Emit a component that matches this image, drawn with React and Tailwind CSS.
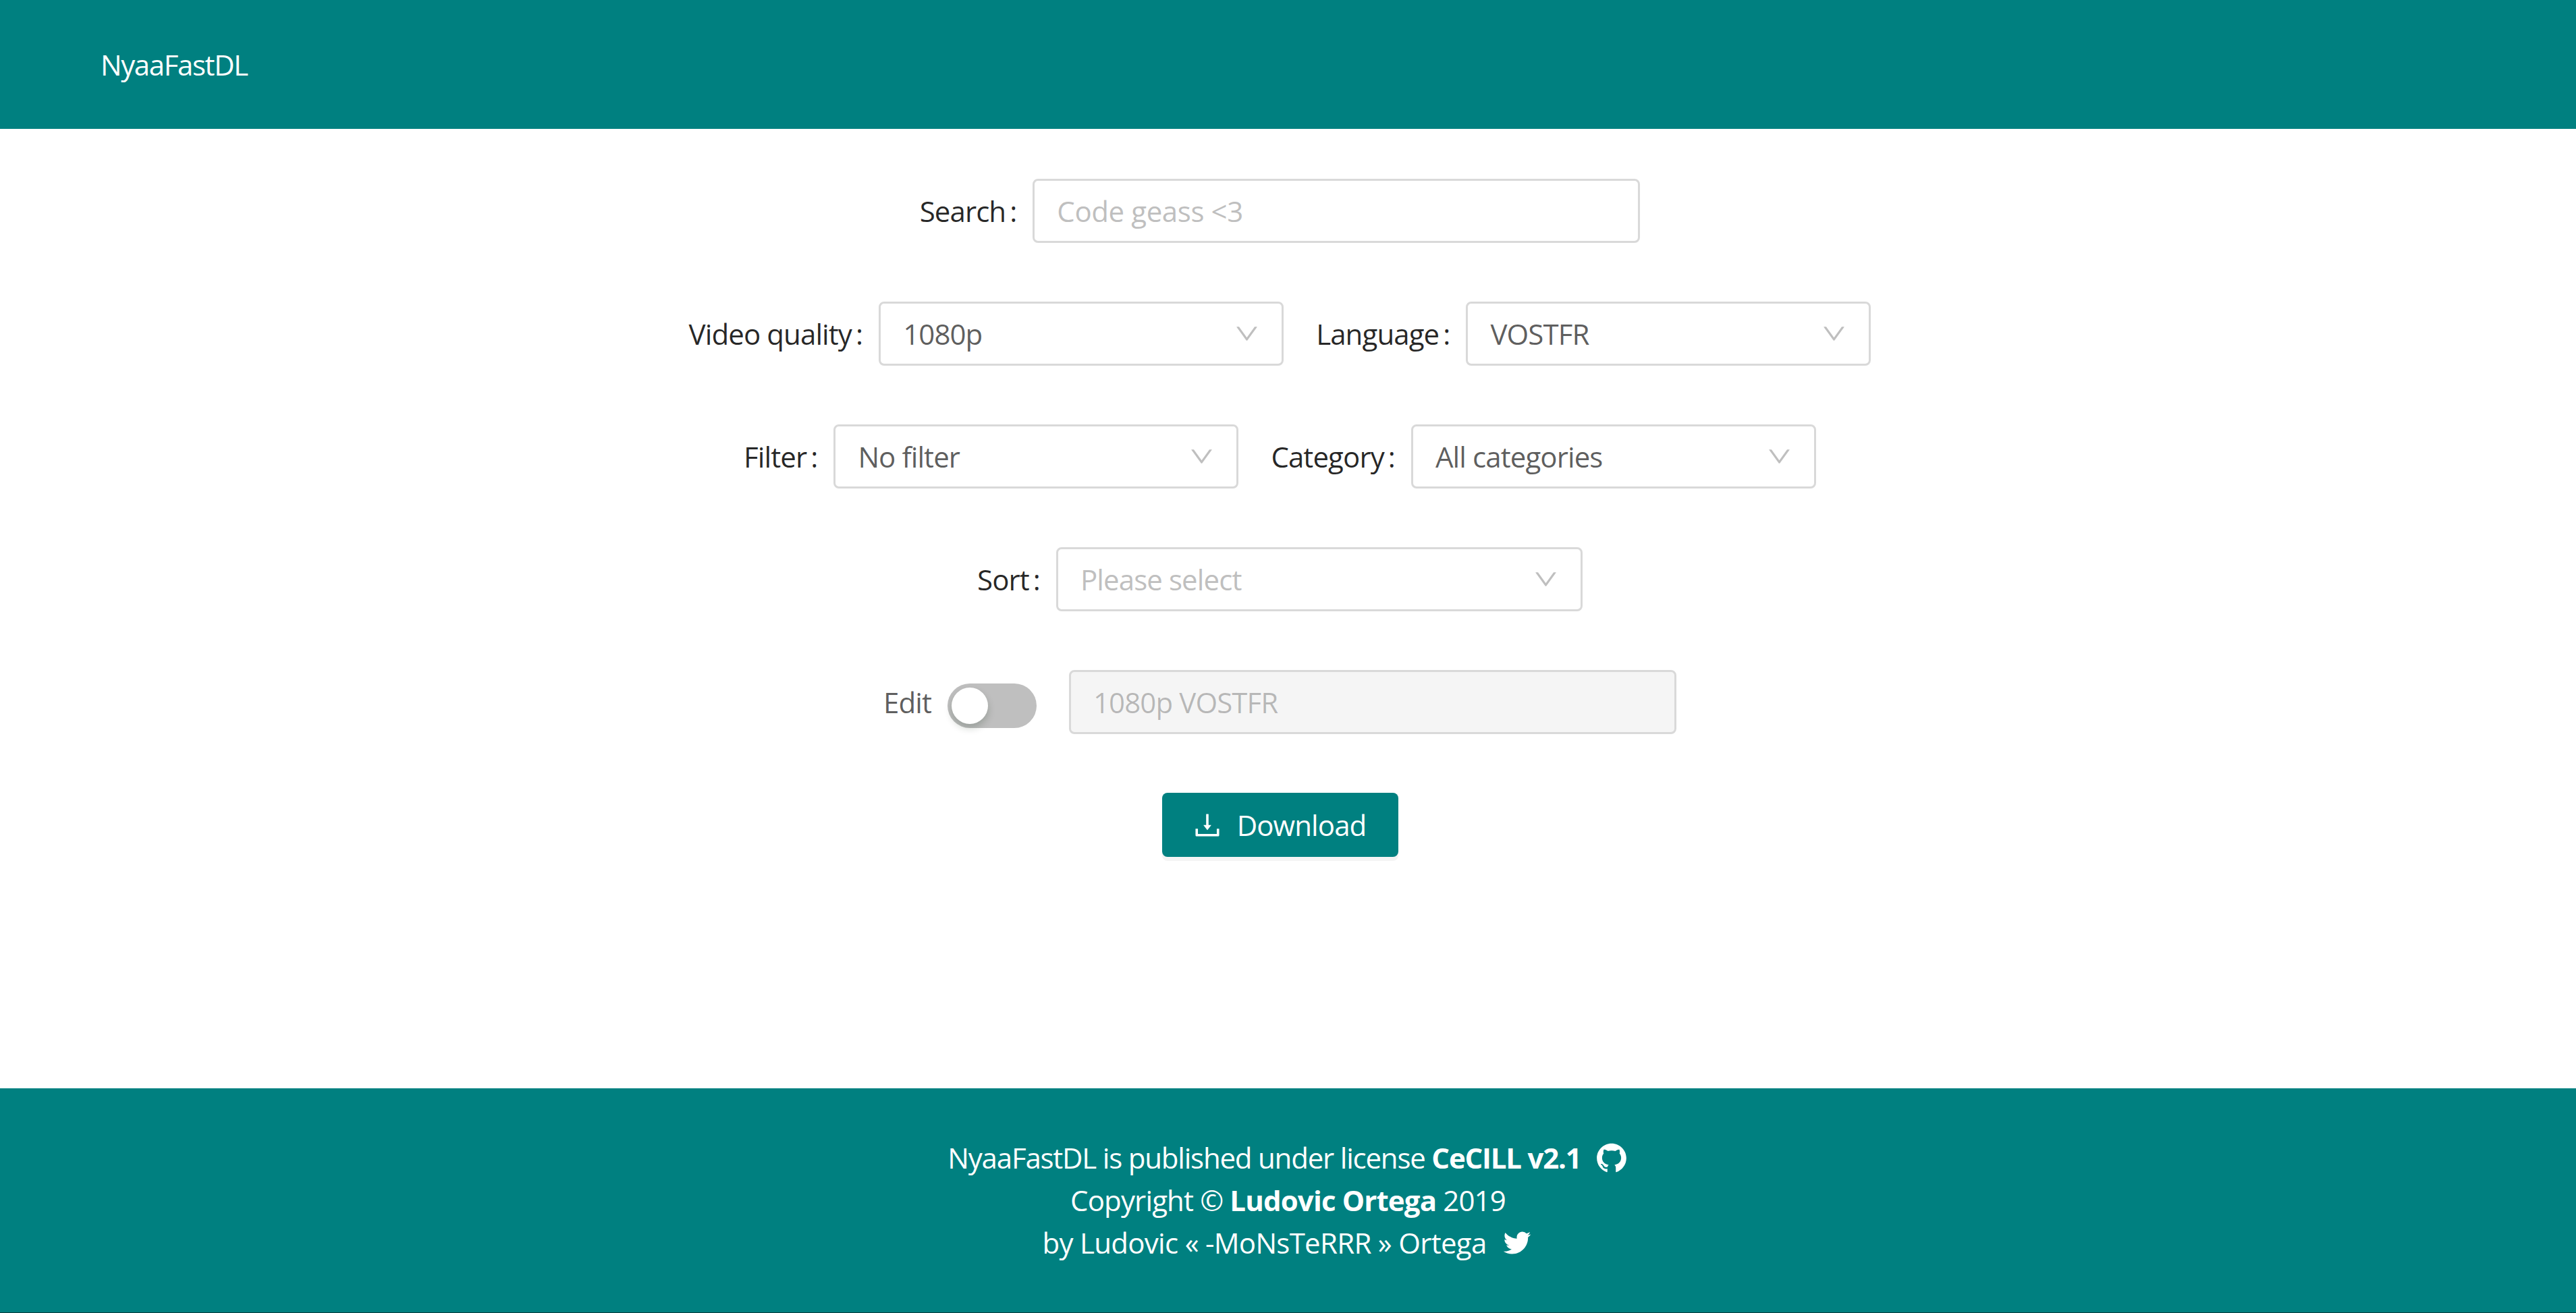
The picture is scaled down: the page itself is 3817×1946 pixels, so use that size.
import { AiFillGithub, AiOutlineDown, AiOutlineDownload, AiOutlineTwitter } from "react-icons/ai";

const Label = ({ text }) => (
  <label className="flex items-center text-[#000000d9] whitespace-nowrap">
    {text}
    <span className="ml-[6px] mr-[24px]">:</span>
  </label>
);

const Select = ({ value, placeholder, width }) => (
  <div
    className={`${width} h-[95px] flex items-center justify-between pl-[33px] pr-[31px] bg-white border-[3px] border-[#d9d9d9] rounded-[8px]`}
  >
    <span className={value ? "text-[#000000a6]" : "text-[#bfbfbf]"}>
      {value || placeholder}
    </span>
    <AiOutlineDown className="w-[41px] h-[41px] text-[#00000040]" />
  </div>
);

const Row = ({ children }) => (
  <div className="flex items-center justify-center gap-[48px] pr-[24px]">
    {children}
  </div>
);

const Field = ({ children }) => <div className="flex items-center">{children}</div>;

export default function App() {
  return (
    <div
      className="min-h-screen flex flex-col bg-white text-[42px] leading-[63px] tracking-[-0.9px]"
      style={{ fontFamily: '"Open Sans", "Noto Sans", sans-serif' }}
    >
      <header className="h-[191px] flex items-center pl-[149px] bg-[#008080] text-white tracking-[-1.4px]">
        NyaaFastDL
      </header>

      <main className="flex-1 flex flex-col gap-[87px] pt-[74px]">
        <Row>
          <Field>
            <Label text="Search" />
            <input
              placeholder="Code geass <3"
              className="w-[900px] h-[95px] px-[33px] border-[3px] border-[#d9d9d9] rounded-[8px] outline-none tracking-[-0.4px] placeholder:text-[#bfbfbf]"
            />
          </Field>
        </Row>
        <Row>
          <Field>
            <Label text="Video quality" />
            <Select value="1080p" width="w-[600px]" />
          </Field>
          <Field>
            <Label text="Language" />
            <Select value="VOSTFR" width="w-[600px]" />
          </Field>
        </Row>
        <Row>
          <Field>
            <Label text="Filter" />
            <Select value="No filter" width="w-[600px]" />
          </Field>
          <Field>
            <Label text="Category" />
            <Select value="All categories" width="w-[600px]" />
          </Field>
        </Row>
        <Row>
          <Field>
            <Label text="Sort" />
            <Select placeholder="Please select" width="w-[780px]" />
          </Field>
        </Row>
        <Row>
          <Field>
            <span className="mr-[24px] text-[#000000a6]">Edit</span>
            <div className="w-[132px] h-[66px] mt-[10px] flex items-center px-[6px] rounded-full bg-[#bfbfbf]">
              <div className="w-[54px] h-[54px] rounded-full bg-white shadow-[0_6px_12px_0_rgba(0,35,11,0.2)]" />
            </div>
          </Field>
          <input
            disabled
            value="1080p VOSTFR"
            className="w-[900px] h-[95px] px-[33px] bg-[#f5f5f5] border-[3px] border-[#d9d9d9] rounded-[8px] tracking-[-0.9px] text-[#00000040]"
          />
        </Row>
        <Row>
          <button className="w-[350px] h-[95px] pr-[4px] flex items-center justify-center gap-[20px] bg-[#008080] text-white rounded-[8px] shadow-[0_6px_0_rgba(0,0,0,0.045)]">
            <AiOutlineDownload className="w-[48px] h-[48px]" />
            Download
          </button>
        </Row>
      </main>

      <footer className="pt-[71px] pb-[72px] bg-[#008080] border-b border-[#0a3a3a] text-white text-center">
        <div className="flex items-center justify-center tracking-[-1.2px]">
          <span>
            NyaaFastDL is published under license <strong className="font-bold">CeCILL v2.1</strong>
          </span>
          <AiFillGithub className="w-[50px] h-[50px] ml-[20px]" />
        </div>
        <div className="tracking-[-0.85px]">
          Copyright © <strong className="font-bold">Ludovic Ortega</strong> 2019
        </div>
        <div className="flex items-center justify-center tracking-[-0.7px]">
          <span>by Ludovic « -MoNsTeRRR » Ortega</span>
          <AiOutlineTwitter className="w-[50px] h-[50px] ml-[20px]" />
        </div>
      </footer>
    </div>
  );
}
